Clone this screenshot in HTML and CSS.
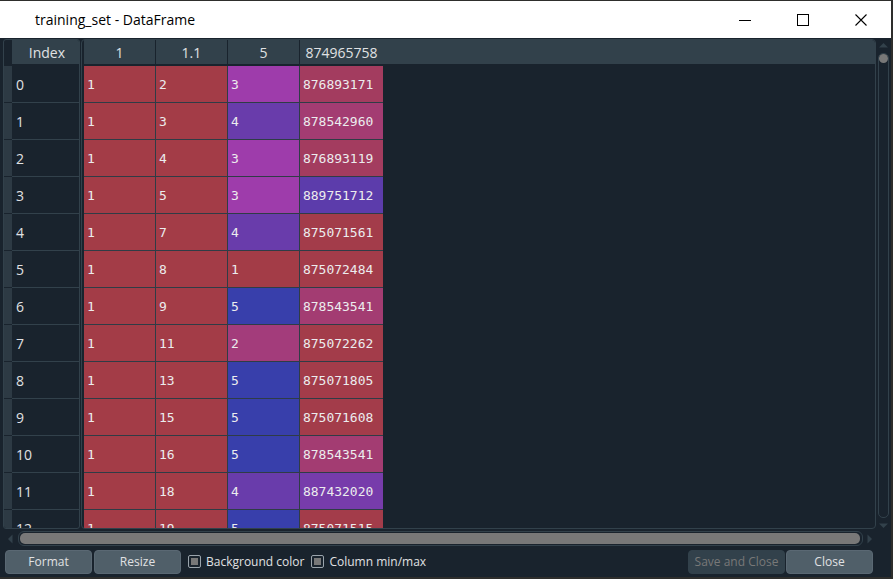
FILE: index.html
```html
<!DOCTYPE html>
<html>
<head>
<meta charset="utf-8">
<link rel="stylesheet" href="styles.css">
</head>
<body>
<div class="window">
  <div class="titlebar">
    <span class="title">training_set - DataFrame</span>
    <div class="controls">
      <svg class="ctl min" width="14" height="14" viewBox="0 0 14 14"><path d="M1 7.5H13" stroke="#000" stroke-width="1"/></svg>
      <svg class="ctl max" width="14" height="14" viewBox="0 0 14 14"><rect x="1.5" y="1.5" width="11" height="11" fill="none" stroke="#000" stroke-width="1"/></svg>
      <svg class="ctl cls" width="14" height="14" viewBox="0 0 14 14"><path d="M1.5 1.5L12.5 12.5M12.5 1.5L1.5 12.5" stroke="#000" stroke-width="1.1"/></svg>
    </div>
  </div>
  <div class="content">
    <div class="tables">
      <div class="index-frame">
        <div class="index-head"><div class="corner"></div><div class="ihcell">Index</div></div>
        <div class="index-body">
          <div class="irow"><div class="vh"></div><div class="icell">0</div></div>
          <div class="irow"><div class="vh"></div><div class="icell">1</div></div>
          <div class="irow"><div class="vh"></div><div class="icell">2</div></div>
          <div class="irow"><div class="vh"></div><div class="icell">3</div></div>
          <div class="irow"><div class="vh"></div><div class="icell">4</div></div>
          <div class="irow"><div class="vh"></div><div class="icell">5</div></div>
          <div class="irow"><div class="vh"></div><div class="icell">6</div></div>
          <div class="irow"><div class="vh"></div><div class="icell">7</div></div>
          <div class="irow"><div class="vh"></div><div class="icell">8</div></div>
          <div class="irow"><div class="vh"></div><div class="icell">9</div></div>
          <div class="irow"><div class="vh"></div><div class="icell">10</div></div>
          <div class="irow"><div class="vh"></div><div class="icell">11</div></div>
          <div class="irow"><div class="vh"></div><div class="icell">12</div></div>
        </div>
      </div>
      <div class="data-frame">
        <div class="data-head">
          <div class="hcell w71">1</div>
          <div class="hcell w71">1.1</div>
          <div class="hcell w71">5</div>
          <div class="hcell w83">874965758</div>
          <div class="hfill"></div>
        </div>
        <div class="data-body">
          <div class="grid">
            <div class="cell red">1</div><div class="cell red">2</div><div class="cell v3">3</div><div class="cell t1">876893171</div>
            <div class="cell red">1</div><div class="cell red">3</div><div class="cell v4">4</div><div class="cell t2">878542960</div>
            <div class="cell red">1</div><div class="cell red">4</div><div class="cell v3">3</div><div class="cell t1">876893119</div>
            <div class="cell red">1</div><div class="cell red">5</div><div class="cell v3">3</div><div class="cell t3">889751712</div>
            <div class="cell red">1</div><div class="cell red">7</div><div class="cell v4">4</div><div class="cell t4">875071561</div>
            <div class="cell red">1</div><div class="cell red">8</div><div class="cell red">1</div><div class="cell t4">875072484</div>
            <div class="cell red">1</div><div class="cell red">9</div><div class="cell v5">5</div><div class="cell t2">878543541</div>
            <div class="cell red">1</div><div class="cell red">11</div><div class="cell v2">2</div><div class="cell t4">875072262</div>
            <div class="cell red">1</div><div class="cell red">13</div><div class="cell v5">5</div><div class="cell t4">875071805</div>
            <div class="cell red">1</div><div class="cell red">15</div><div class="cell v5">5</div><div class="cell t4">875071608</div>
            <div class="cell red">1</div><div class="cell red">16</div><div class="cell v5">5</div><div class="cell t2">878543541</div>
            <div class="cell red">1</div><div class="cell red">18</div><div class="cell v4">4</div><div class="cell t5">887432020</div>
            <div class="cell red">1</div><div class="cell red">19</div><div class="cell v5">5</div><div class="cell t4">875071515</div>
          </div>
        </div>
      </div>
      <div class="vscroll">
        <svg class="arrow" width="13" height="6" viewBox="0 0 13 6"><path d="M2 5.5L6.5 1L11 5.5Z" fill="#32414b"/></svg>
        <div class="vgroove"><div class="vhandle"></div></div>
        <svg class="arrow" width="13" height="6" viewBox="0 0 13 6"><path d="M2 0.5L6.5 5L11 0.5Z" fill="#32414b"/></svg>
      </div>
    </div>
    <div class="hscroll">
      <svg class="harrow" width="6" height="12" viewBox="0 0 6 12"><path d="M5.5 1.5L1 6L5.5 10.5Z" fill="#32414b"/></svg>
      <div class="hgroove"><div class="hhandle"></div></div>
      <svg class="harrow" width="6" height="12" viewBox="0 0 6 12"><path d="M0.5 1.5L5 6L0.5 10.5Z" fill="#32414b"/></svg>
    </div>
    <div class="buttons">
      <button class="btn">Format</button>
      <button class="btn">Resize</button>
      <label class="check"><span class="box"><span class="fill"></span></span>Background color</label>
      <label class="check"><span class="box"><span class="fill"></span></span>Column min/max</label>
      <div class="spacer"></div>
      <button class="btn disabled">Save and Close</button>
      <button class="btn close">Close</button>
    </div>
  </div>
</div>
</body>
</html>
```
FILE: styles.css
```css
* { box-sizing: border-box; }
html, body { margin: 0; padding: 0; }
body {
  background: #2e2e2c;
  width: 893px;
  height: 579px;
  overflow: hidden;
  font-family: "Open Sans", "Noto Sans", sans-serif;
}
.window {
  margin-top: 1px;
  width: 891px;
  height: 576px;
  display: flex;
  flex-direction: column;
  background: #19232d;
}
.titlebar {
  height: 37px;
  background: #ffffff;
  display: flex;
  align-items: center;
  flex-shrink: 0;
}
.title {
  margin-left: 35px;
  font-size: 14px;
  color: #000;
  flex: 1;
}
.controls {
  display: flex;
  align-items: center;
  gap: 44px;
  margin-right: 23px;
}
.ctl { display: block; }
.content {
  flex: 1;
  padding: 1px 1px 0 3px;
  display: flex;
  flex-direction: column;
  color: #e0e1e3;
}
.tables {
  display: flex;
  height: 490px;
}
.index-frame {
  width: 77px;
  border: 1px solid #32414b;
  border-radius: 3px;
  overflow: hidden;
  display: flex;
  flex-direction: column;
}
.index-head {
  display: flex;
  height: 24px;
  margin-bottom: 2px;
}
.corner { width: 8px; }
.ihcell {
  flex: 1;
  background: #32414b;
  font-size: 14px;
  display: flex;
  align-items: center;
  justify-content: center;
  padding-left: 3px;
  padding-top: 1px;
}
.index-body {
  flex: 1;
  overflow: hidden;
}
.irow {
  display: flex;
  height: 37px;
}
.vh {
  width: 8px;
  height: 36px;
  background: #2d3a44;
}
.icell {
  flex: 1;
  height: 37px;
  border-bottom: 1px solid #32414b;
  font-size: 14px;
  display: flex;
  align-items: center;
  padding-left: 4px;
}
.data-frame {
  margin-left: 1px;
  width: 796px;
  border: 1px solid #32414b;
  border-radius: 4px;
  overflow: hidden;
  display: flex;
  flex-direction: column;
  padding-left: 2px;
}
.data-head {
  display: flex;
  height: 24px;
  margin-bottom: 2px;
  background: #32414b;
  border-top-right-radius: 3px;
  font-size: 14px;
  gap: 1px;
}
.hcell {
  display: flex;
  align-items: center;
  justify-content: center;
  background: #32414b;
  box-shadow: 1px 0 0 #19232d;
  padding-top: 1px;
}
.w71 { width: 71px; }
.w83 { width: 83px; box-shadow: none; }
.hfill { flex: 1; }
.data-body {
  flex: 1;
  overflow: hidden;
}
.grid {
  display: grid;
  width: max-content;
  grid-template-columns: 71px 71px 71px 83px;
  grid-auto-rows: 36px;
  gap: 1px;
  background: #2f3c46;
}
.cell {
  font-family: "DejaVu Sans Mono", "Liberation Mono", monospace;
  font-size: 13px;
  display: flex;
  align-items: center;
  padding-left: 3px;
  color: #ececee;
}
.red { background: #a33c47; }
.v2 { background: #a33c7b; }
.v3 { background: #9e3cab; }
.v4 { background: #693cab; }
.v5 { background: #383fab; }
.t1 { background: #a33c5f; }
.t2 { background: #a33c72; }
.t3 { background: #5c3cab; }
.t4 { background: #a33c4a; }
.t5 { background: #773cab; }
.vscroll {
  margin-left: 1px;
  width: 13px;
  display: flex;
  flex-direction: column;
  align-items: center;
  padding-top: 3px;
}
.arrow { display: block; }
.vgroove {
  margin: 5px 0 5px;
  width: 11px;
  flex: 1;
  border: 1px solid #32414b;
  border-radius: 5px;
}
.vhandle {
  width: 9px;
  height: 9px;
  border-radius: 50%;
  background: #787878;
}
.hscroll {
  height: 17px;
  margin-top: 1px;
  display: flex;
  align-items: center;
  padding-left: 4px;
}
.harrow { display: block; flex-shrink: 0; }
.hgroove {
  margin: 0 4px 0 5px;
  width: 845px;
  height: 15px;
  border: 1px solid #32414b;
  border-radius: 6px;
  padding: 1px;
}
.hhandle {
  width: 840px;
  height: 11px;
  border-radius: 5px;
  background: #787878;
}
.buttons {
  display: flex;
  align-items: center;
  height: 27px;
  margin-top: 1px;
  padding-left: 2px;
  padding-right: 17px;
  gap: 2px;
}
.btn {
  height: 24px;
  width: 87px;
  border: 1px solid #5a6873;
  border-radius: 4px;
  background: #505f69;
  color: #e0e1e3;
  font-family: "Open Sans", "Noto Sans", sans-serif;
  font-size: 12px;
  padding: 0;
}
.btn.disabled {
  width: 97px;
  background: #32414b;
  border-color: #32414b;
  color: #787878;
}
.btn.close { margin-left: -1px; }
.check {
  display: flex;
  align-items: center;
  font-size: 12px;
  color: #e0e1e3;
  margin-left: 5px;
}
.box {
  width: 13px;
  height: 13px;
  border: 1px solid #9aa4ac;
  border-radius: 2px;
  padding: 2px;
  margin-right: 5px;
  background: #19232d;
}
.fill {
  display: block;
  width: 7px;
  height: 7px;
  background: #787878;
}
.spacer { flex: 1; }
```
